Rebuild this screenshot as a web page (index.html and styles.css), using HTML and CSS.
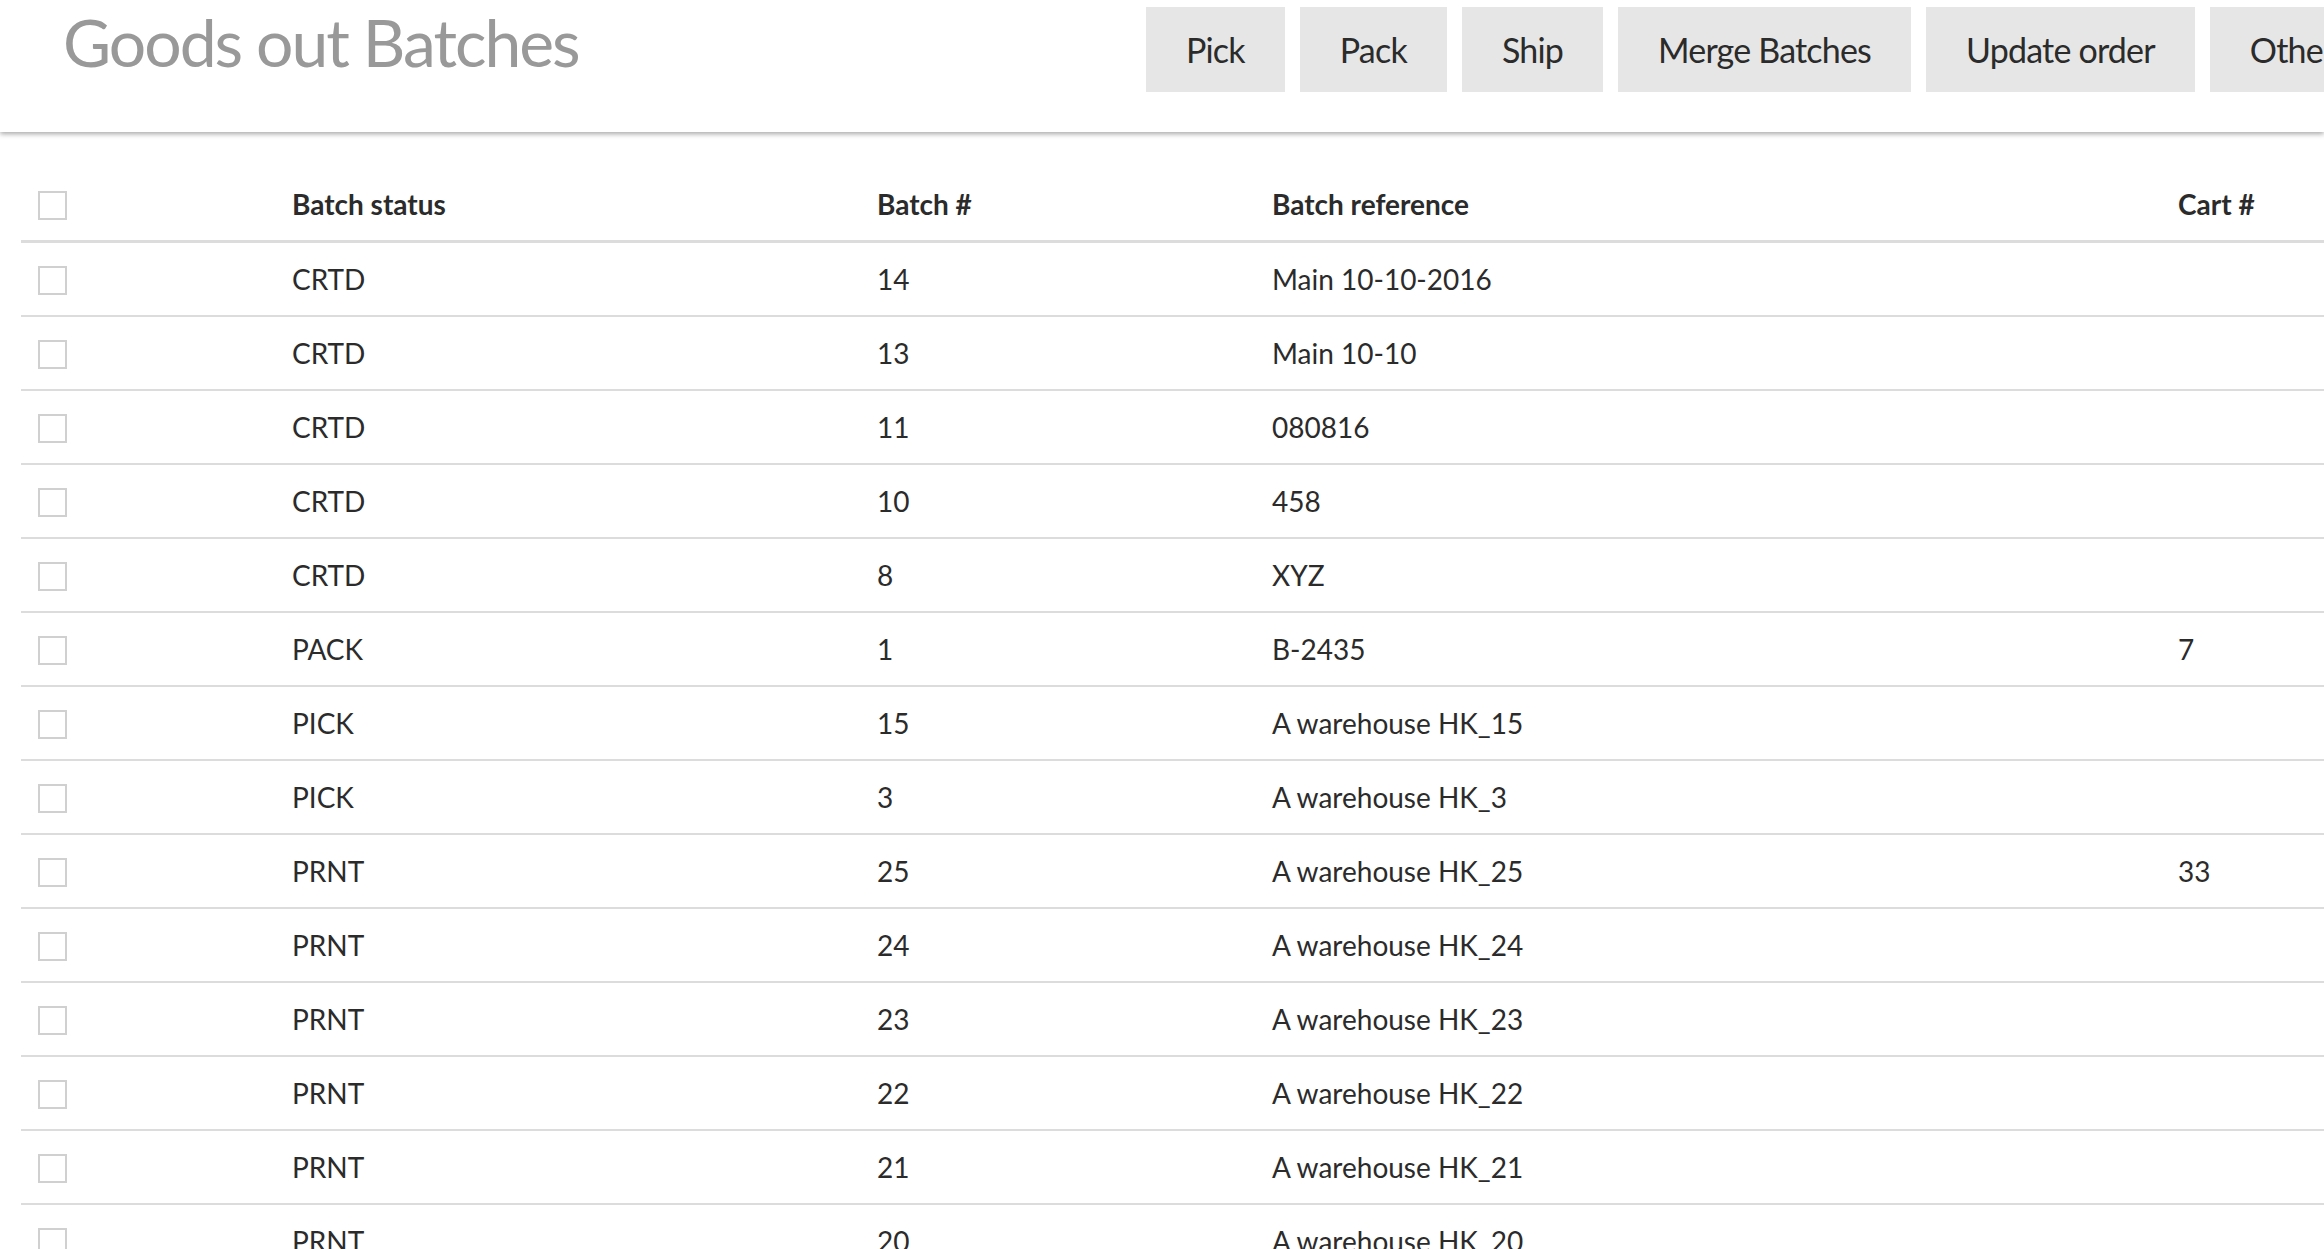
FILE: index.html
```html
<!DOCTYPE html>
<html lang="en">
<head>
    <meta charset="UTF-8">
    <meta name="viewport" content="width=device-width, initial-scale=1.0">
    <title>Goods out Batches</title>
    <link rel="stylesheet" href="styles.css">
</head>
<body>
    <header class="page-header">
        <h1 class="page-title">Goods out Batches</h1>
        <nav class="actions">
            <button class="action-btn">Pick</button>
            <button class="action-btn">Pack</button>
            <button class="action-btn">Ship</button>
            <button class="action-btn">Merge Batches</button>
            <button class="action-btn">Update order</button>
            <button class="action-btn">Other</button>
        </nav>
    </header>

    <main class="content">
        <table class="batches">
            <colgroup>
                <col class="col-check">
                <col class="col-status">
                <col class="col-number">
                <col class="col-ref">
                <col class="col-cart">
            </colgroup>
            <thead>
                <tr>
                    <th class="check-cell"><input type="checkbox" class="check"></th>
                    <th>Batch status</th>
                    <th>Batch #</th>
                    <th>Batch reference</th>
                    <th>Cart #</th>
                </tr>
            </thead>
            <tbody>
                <tr><td class="check-cell"><input type="checkbox" class="check"></td><td>CRTD</td><td>14</td><td>Main 10-10-2016</td><td></td></tr>
                <tr><td class="check-cell"><input type="checkbox" class="check"></td><td>CRTD</td><td>13</td><td>Main 10-10</td><td></td></tr>
                <tr><td class="check-cell"><input type="checkbox" class="check"></td><td>CRTD</td><td>11</td><td>080816</td><td></td></tr>
                <tr><td class="check-cell"><input type="checkbox" class="check"></td><td>CRTD</td><td>10</td><td>458</td><td></td></tr>
                <tr><td class="check-cell"><input type="checkbox" class="check"></td><td>CRTD</td><td>8</td><td>XYZ</td><td></td></tr>
                <tr><td class="check-cell"><input type="checkbox" class="check"></td><td>PACK</td><td>1</td><td>B-2435</td><td>7</td></tr>
                <tr><td class="check-cell"><input type="checkbox" class="check"></td><td>PICK</td><td>15</td><td>A warehouse HK_15</td><td></td></tr>
                <tr><td class="check-cell"><input type="checkbox" class="check"></td><td>PICK</td><td>3</td><td>A warehouse HK_3</td><td></td></tr>
                <tr><td class="check-cell"><input type="checkbox" class="check"></td><td>PRNT</td><td>25</td><td>A warehouse HK_25</td><td>33</td></tr>
                <tr><td class="check-cell"><input type="checkbox" class="check"></td><td>PRNT</td><td>24</td><td>A warehouse HK_24</td><td></td></tr>
                <tr><td class="check-cell"><input type="checkbox" class="check"></td><td>PRNT</td><td>23</td><td>A warehouse HK_23</td><td></td></tr>
                <tr><td class="check-cell"><input type="checkbox" class="check"></td><td>PRNT</td><td>22</td><td>A warehouse HK_22</td><td></td></tr>
                <tr><td class="check-cell"><input type="checkbox" class="check"></td><td>PRNT</td><td>21</td><td>A warehouse HK_21</td><td></td></tr>
                <tr><td class="check-cell"><input type="checkbox" class="check"></td><td>PRNT</td><td>20</td><td>A warehouse HK_20</td><td></td></tr>
            </tbody>
        </table>
    </main>
</body>
</html>
```

FILE: styles.css
```css
html, body {
    overflow: hidden;
}

body {
    font-family: Lato, 'Liberation Sans', sans-serif;
    color: #2b2b2b;
    background-color: #fff;
    margin: 0;
}

.page-header {
    display: flex;
    align-items: flex-start;
    height: 132px;
    background-color: #fff;
    box-shadow: 0 2px 5px rgba(0, 0, 0, 0.35);
    position: relative;
    z-index: 1;
}

.page-title {
    flex: 0 0 auto;
    width: 1083px;
    margin: 0 0 0 63px;
    font-size: 66px;
    font-weight: 400;
    letter-spacing: -2px;
    line-height: 84px;
    color: #999;
}

.actions {
    display: flex;
    gap: 15px;
    flex-shrink: 0;
    padding-top: 7px;
}

.action-btn {
    flex-shrink: 0;
    height: 85px;
    padding: 0 40px;
    border: none;
    background-color: #e6e6e6;
    font-family: inherit;
    font-size: 34px;
    letter-spacing: -0.8px;
    color: #2b2b2b;
}

.content {
    padding: 36px 0 0 21px;
}

.batches {
    width: 2400px;
    table-layout: fixed;
    border-collapse: collapse;
    font-size: 28px;
}

.col-check { width: 271px; }
.col-status { width: 585px; }
.col-number { width: 395px; }
.col-ref { width: 906px; }

.batches th,
.batches td {
    padding: 0;
    text-align: left;
    vertical-align: middle;
}

.batches th {
    height: 72px;
    font-weight: 700;
    border-bottom: 3px solid #dcdcdc;
}

.batches td {
    height: 72px;
    border-bottom: 2px solid #dcdcdc;
}

.batches .check-cell {
    padding-left: 17px;
}

.check {
    appearance: none;
    -webkit-appearance: none;
    display: block;
    width: 29px;
    height: 29px;
    margin: 2px 0 0 0;
    border: 2px solid #d0d0d0;
    background: #fff;
}
```
